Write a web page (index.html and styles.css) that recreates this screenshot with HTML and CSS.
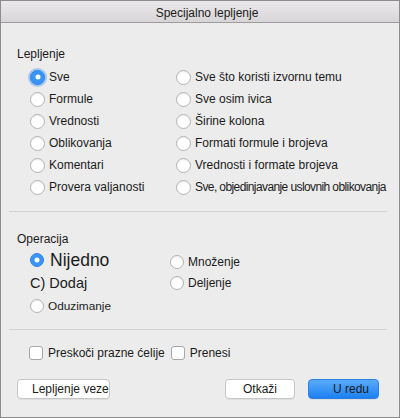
FILE: index.html
```html
<!DOCTYPE html>
<html lang="sr">
<head>
    <meta charset="UTF-8">
    <title>Specijalno lepljenje</title>
    <link rel="stylesheet" href="styles.css">
</head>
<body>
    <div class="dialog">
        <div class="titlebar">Specijalno lepljenje</div>

        <div class="section paste">
            <div class="group-label">Lepljenje</div>
            <div class="paste-grid">
                <div class="option"><span class="radio checked glow"></span>Sve</div>
                <div class="option"><span class="radio"></span>Formule</div>
                <div class="option"><span class="radio"></span>Vrednosti</div>
                <div class="option"><span class="radio"></span>Oblikovanja</div>
                <div class="option"><span class="radio"></span>Komentari</div>
                <div class="option"><span class="radio"></span>Provera valjanosti</div>
                <div class="option"><span class="radio"></span>Sve što koristi izvornu temu</div>
                <div class="option"><span class="radio"></span>Sve osim ivica</div>
                <div class="option"><span class="radio"></span>Širine kolona</div>
                <div class="option"><span class="radio"></span>Formati formule i brojeva</div>
                <div class="option"><span class="radio"></span>Vrednosti i formate brojeva</div>
                <div class="option"><span class="radio"></span><span class="tight">Sve, objedinjavanje uslovnih oblikovanja</span></div>
            </div>
        </div>

        <div class="separator"></div>

        <div class="section operation">
            <div class="group-label">Operacija</div>
            <div class="op-columns">
                <div class="op-left">
                    <div class="option big"><span class="radio checked small"></span>Nijedno</div>
                    <div class="option dodaj">C) Dodaj</div>
                    <div class="option"><span class="radio small"></span><span class="smaller">Oduzimanje</span></div>
                </div>
                <div class="op-right">
                    <div class="option"><span class="radio small"></span>Množenje</div>
                    <div class="option"><span class="radio small"></span>Deljenje</div>
                </div>
            </div>
        </div>

        <div class="separator second"></div>

        <div class="checks">
            <div class="check-item first"><span class="checkbox"></span>Preskoči prazne ćelije</div>
            <div class="check-item"><span class="checkbox"></span>Prenesi</div>
        </div>

        <div class="buttons">
            <button class="btn link-btn">Lepljenje veze</button>
            <div class="spacer"></div>
            <button class="btn cancel-btn">Otkaži</button>
            <button class="btn ok-btn">U redu</button>
        </div>
    </div>
</body>
</html>
```

FILE: styles.css
```css
body {
    margin: 0;
    padding: 0;
    font-family: "Liberation Sans", Arial, sans-serif;
    font-size: 12px;
    color: #1b1b1b;
    background-color: #ececec;
}
.dialog {
    width: 400px;
    height: 418px;
    box-sizing: border-box;
    border: 1px solid #8d8d8d;
    background-color: #ececec;
    display: flex;
    flex-direction: column;
}
.titlebar {
    height: 17px;
    padding-top: 4px;
    line-height: 17px;
    text-align: center;
    padding-left: 14px;
    background: linear-gradient(#ebe9eb, #d7d5d7);
    border-bottom: 1px solid #9c9c9c;
}
.section {
    padding-left: 16px;
}
.group-label {
    line-height: 16px;
    height: 16px;
}
.paste {
    padding-top: 23px;
}
.paste-grid {
    margin-top: 4px;
    margin-left: 13px;
    display: grid;
    grid-template-columns: 146px auto;
    grid-template-rows: repeat(6, 22px);
    grid-auto-flow: column;
}
.option {
    display: flex;
    align-items: center;
    height: 22px;
    white-space: nowrap;
}
.tight {
    letter-spacing: -0.6px;
}
.radio {
    width: 13px;
    height: 13px;
    border: 1px solid #b3b3b3;
    border-radius: 50%;
    background: #ffffff;
    box-shadow: inset 0 1px 1px rgba(0, 0, 0, 0.08);
    margin-right: 4px;
    flex-shrink: 0;
    position: relative;
}
.radio.small {
    width: 12px;
    height: 12px;
}
.radio.checked {
    background: #3a94f6;
    border-color: #2f85e6;
    box-shadow: none;
}
.radio.checked::after {
    content: "";
    position: absolute;
    width: 5px;
    height: 5px;
    border-radius: 50%;
    background: #ffffff;
    left: 50%;
    top: 50%;
    transform: translate(-50%, -50%);
}
.radio.glow {
    box-shadow: 0 0 0 2px rgba(120, 175, 240, 0.6);
}
.separator {
    height: 1px;
    background-color: #d2d2d2;
    margin: 13px 12px 0 8px;
}
.separator.second {
    margin-top: 12px;
}
.operation {
    padding-top: 19px;
    padding-left: 16px;
}
.op-columns {
    display: flex;
    margin-left: 13px;
}
.op-left {
    width: 140px;
    padding-top: 2px;
}
.op-right {
    padding-top: 4px;
}
.op-right .option {
    height: 21px;
}
.option.big {
    font-size: 17.5px;
    height: 22px;
}
.option.big .radio {
    margin-right: 6px;
}
.option.dodaj {
    font-size: 14.5px;
    height: 24px;
}
.smaller {
    font-size: 11.8px;
}
.checks {
    display: flex;
    align-items: center;
    margin-top: 16px;
    padding-left: 28px;
    height: 14px;
}
.check-item {
    display: flex;
    align-items: center;
    white-space: nowrap;
}
.check-item.first {
    margin-right: 6px;
}
.checkbox {
    width: 12px;
    height: 12px;
    border: 1px solid #a8a8a8;
    border-radius: 3px;
    background: #ffffff;
    margin-right: 5px;
}
.buttons {
    display: flex;
    margin-top: 19px;
    padding-left: 16px;
    padding-right: 20px;
}
.spacer {
    flex: 1;
}
.btn {
    font-family: "Liberation Sans", Arial, sans-serif;
    font-size: 12px;
    color: #1b1b1b;
    height: 20px;
    padding: 0;
    border: 1px solid #c6c6c6;
    border-radius: 4px;
    background: #ffffff;
    box-shadow: 0 1px 0 rgba(0, 0, 0, 0.06);
}
.link-btn {
    width: 93px;
    text-align: left;
    padding-left: 14px;
}
.cancel-btn {
    width: 70px;
    margin-right: 13px;
}
.ok-btn {
    width: 71px;
    text-align: left;
    padding-left: 24px;
    border-color: #2a80e8;
    background: linear-gradient(#5aabfa, #1b80f1);
}
```
